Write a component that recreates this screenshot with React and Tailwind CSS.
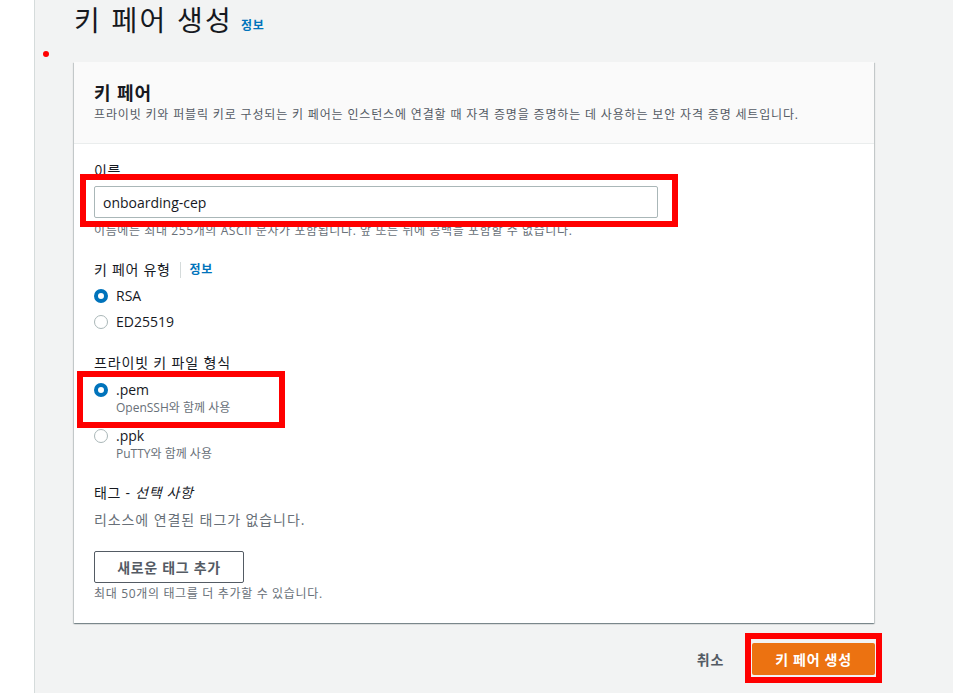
import React from "react";

const RedBox = ({ className }) => (
  <div
    className={`pointer-events-none absolute border-[6px] border-[#ff0000] ${className}`}
  />
);

const Radio = ({ checked, label, desc }) => (
  <div className="flex items-start">
    <span
      className={`mt-[3px] h-[14px] w-[14px] shrink-0 rounded-full bg-white ${
        checked ? "border-[4px] border-[#0073bb]" : "border-[1.5px] border-[#aab7b8]"
      }`}
    />
    <div className="ml-2">
      <div className="text-[14px] leading-[20px] text-[#16191f]">{label}</div>
      {desc && (
        <div className="text-[12px] leading-[16px] text-[#687078]">{desc}</div>
      )}
    </div>
  </div>
);

export default function App() {
  return (
    <div className="flex min-h-[693px] bg-white font-['Open_Sans','Noto_Sans_CJK_KR',sans-serif]">
      <div className="w-[35px] shrink-0 border-r border-[#d5dbdb] bg-white" />

      <div className="relative flex-1 bg-[#f2f3f3] pl-[39px] pr-[77px]">
        <span className="absolute left-[8px] top-[51px] h-[6px] w-[6px] rounded-full bg-[#ff0000]" />

        <div className="flex h-[44px] items-end pb-[6px]">
          <h1 className="text-[28px] font-normal leading-[36px] tracking-[0.08em] text-[#16191f]">
            키 페어 생성
          </h1>
          <a className="mb-[4px] ml-[8px] text-[12px] font-bold leading-[16px] tracking-[0.05em] text-[#0073bb]">
            정보
          </a>
        </div>

        <div className="mt-[18px] w-[800px] bg-white shadow-[0_1px_1px_0_rgba(0,28,36,0.3),1px_1px_1px_0_rgba(0,28,36,0.15),-1px_1px_1px_0_rgba(0,28,36,0.15)]">
          <div className="border-b border-[#eaeded] bg-[#fafafa] px-5 pb-[20px] pt-[20px]">
            <h2 className="text-[18px] font-bold leading-[22px] tracking-[0.05em] text-[#16191f]">키 페어</h2>
            <p className="mt-[3px] text-[12px] leading-[16px] tracking-[0.07em] text-[#545b64]">
              프라이빗 키와 퍼블릭 키로 구성되는 키 페어는 인스턴스에 연결할 때 자격 증명을 증명하는 데 사용하는 보안 자격 증명 세트입니다.
            </p>
          </div>

          <div className="px-5 pb-[21px] pt-[17px]">
            <div className="text-[14px] leading-[20px] tracking-[0.05em] text-[#16191f]">이름</div>
            <div className="relative mt-[5px] w-[564px]">
              <div className="flex h-[32px] items-center rounded-[2px] border border-[#aab7b8] bg-white px-2 text-[14px] text-[#16191f]">
                onboarding-cep
              </div>
              <RedBox className="-bottom-[9px] -left-[14px] -right-[20px] -top-[12px]" />
            </div>
            <p className="mt-[5px] text-[12px] leading-[16px] tracking-[0.05em] text-[#687078]">
              이름에는 최대 255개의 ASCII 문자가 포함됩니다. 앞 또는 뒤에 공백을 포함할 수 없습니다.
            </p>

            <div className="mt-[21px] flex items-center text-[14px] leading-[20px] tracking-[0.05em] text-[#16191f]">
              키 페어 유형
              <span className="mx-[9px] h-[16px] w-px bg-[#d5dbdb]" />
              <a className="text-[12px] font-bold text-[#0073bb]">정보</a>
            </div>
            <div className="mt-[6px] flex flex-col gap-[6px]">
              <Radio checked label="RSA" />
              <Radio label="ED25519" />
            </div>

            <div className="mt-[21px] text-[14px] leading-[20px] tracking-[0.06em] text-[#16191f]">
              프라이빗 키 파일 형식
            </div>
            <div className="mt-[7px] flex flex-col gap-[10px]">
              <div className="relative">
                <Radio checked label=".pem" desc="OpenSSH와 함께 사용" />
                <RedBox className="-left-[17px] -top-[9px] h-[57px] w-[208px]" />
              </div>
              <Radio label=".ppk" desc="PuTTY와 함께 사용" />
            </div>

            <div className="mt-[21px] text-[14px] leading-[20px] tracking-[0.05em] text-[#16191f]">
              태그 - <i>선택 사항</i>
            </div>
            <p className="mt-[7px] text-[14px] leading-[20px] tracking-[0.065em] text-[#687078]">
              리소스에 연결된 태그가 없습니다.
            </p>
            <button className="mt-[21px] h-[32px] w-[150px] rounded-[2px] border border-[#545b64] bg-white text-[14px] font-bold tracking-[0.05em] text-[#545b64]">
              새로운 태그 추가
            </button>
            <p className="mt-[3px] text-[12px] leading-[16px] tracking-[0.055em] text-[#687078]">
              최대 50개의 태그를 더 추가할 수 있습니다.
            </p>
          </div>
        </div>

        <div className="mt-[20px] flex w-[801px] items-center justify-end">
          <span className="mr-[28px] text-[14px] font-bold tracking-[0.05em] text-[#545b64]">취소</span>
          <div className="relative">
            <button className="h-[32px] w-[123px] rounded-[2px] bg-[#ec7211] text-[14px] font-bold tracking-[0.05em] text-white">
              키 페어 생성
            </button>
            <RedBox className="-bottom-[8px] -left-[7px] -right-[7px] -top-[10px]" />
          </div>
        </div>
      </div>
    </div>
  );
}
